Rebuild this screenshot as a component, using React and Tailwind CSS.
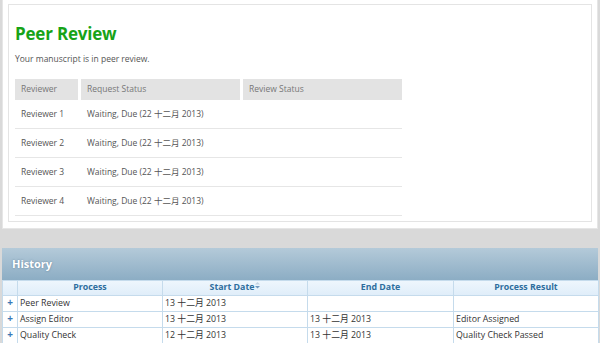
import React from "react";

const font = { fontFamily: '"Open Sans", "Noto Sans CJK SC", sans-serif' };

function Cell({ children, className = "" }) {
  return <div className={"pl-[6px] flex items-center " + className}>{children}</div>;
}

export default function App() {
  const reviewers = [1, 2, 3, 4];
  const history = [
    ["Peer Review", "13 十二月 2013", "", ""],
    ["Assign Editor", "13 十二月 2013", "13 十二月 2013", "Editor Assigned"],
    ["Quality Check", "12 十二月 2013", "13 十二月 2013", "Quality Check Passed"],
  ];
  return (
    <div className="w-[600px] h-[343px] overflow-hidden bg-[#d9d9d9] text-[#555]" style={font}>
      <div className="mx-[2px] bg-white border-x border-b border-[#e6e6e6] px-[5px] pt-[4px] pb-[6px]">
        <div className="border border-[#e4e4e4] h-[218px] px-[6px]">
          <h1 className="text-[17px] font-bold text-[#17a317] leading-none pt-[20px] tracking-[-0.2px]">Peer Review</h1>
          <p className="text-[8.5px] text-[#555] mt-[13px] leading-none">Your manuscript is in peer review.</p>
          <div className="mt-[15px] w-[387px] text-[8.5px]">
            <div className="grid grid-cols-[63px_159px_159px] gap-x-[3px] h-[21px]">
              <Cell className="bg-[#e3e3e3] text-[#777]">Reviewer</Cell>
              <Cell className="bg-[#e3e3e3] text-[#777]">Request Status</Cell>
              <Cell className="bg-[#e3e3e3] text-[#777]">Review Status</Cell>
            </div>
            {reviewers.map((n) => (
              <div
                key={n}
                className="grid grid-cols-[63px_159px_159px] gap-x-[3px] border-b border-[#e6e6e6] h-[29px] pt-[2px]"
              >
                <Cell className="text-[#555]">Reviewer {n}</Cell>
                <Cell className="text-[#555]">Waiting, Due (22 十二月 2013)</Cell>
                <Cell></Cell>
              </div>
            ))}
          </div>
        </div>
      </div>
      <div className="mt-[19px] mx-[2px]">
        <div className="h-[32px] bg-gradient-to-b from-[#b4cad9] to-[#8cadc4] flex items-center pl-[10px]">
          <span className="text-white font-bold text-[11px] [text-shadow:0_0_2px_rgba(60,90,120,0.6)]">History</span>
        </div>
        <table className="table-fixed border-collapse w-[596px] text-[8.8px] bg-white">
          <colgroup>
            <col className="w-[15px]" />
            <col className="w-[145px]" />
            <col className="w-[145px]" />
            <col className="w-[146px]" />
            <col className="w-[145px]" />
          </colgroup>
          <thead>
            <tr className="h-[15px] bg-gradient-to-b from-[#eef6fd] to-[#dfedf9] text-[#2e6e9e] font-bold">
              <th className="border border-[#c5dbec] p-0"></th>
              <th className="border border-[#c5dbec] p-0 text-center font-bold">Process</th>
              <th className="border border-[#c5dbec] p-0 text-center font-bold">
                Start Date
                <svg width="5" height="7" viewBox="0 0 5 7" className="inline-block align-top ml-[1px] mt-[1px]">
                  <path d="M0 2.5 L2.5 0 L5 2.5 Z" fill="#c2d3e3" />
                  <path d="M0 4 L2.5 6.5 L5 4 Z" fill="#6f97bd" />
                </svg>
              </th>
              <th className="border border-[#c5dbec] p-0 text-center font-bold">End Date</th>
              <th className="border border-[#c5dbec] p-0 text-center font-bold">Process Result</th>
            </tr>
          </thead>
          <tbody>
            {history.map((r, i) => (
              <tr key={i} className="h-[16px] text-[#333]">
                <td className="border border-[#c5dbec] p-0 text-center text-[#3a78b5] font-bold text-[10px] leading-none align-top pt-[1px]">+</td>
                {r.map((c, j) => (
                  <td key={j} className="border border-[#c5dbec] px-[2px] py-0 whitespace-nowrap">{c}</td>
                ))}
              </tr>
            ))}
          </tbody>
        </table>
      </div>
    </div>
  );
}
